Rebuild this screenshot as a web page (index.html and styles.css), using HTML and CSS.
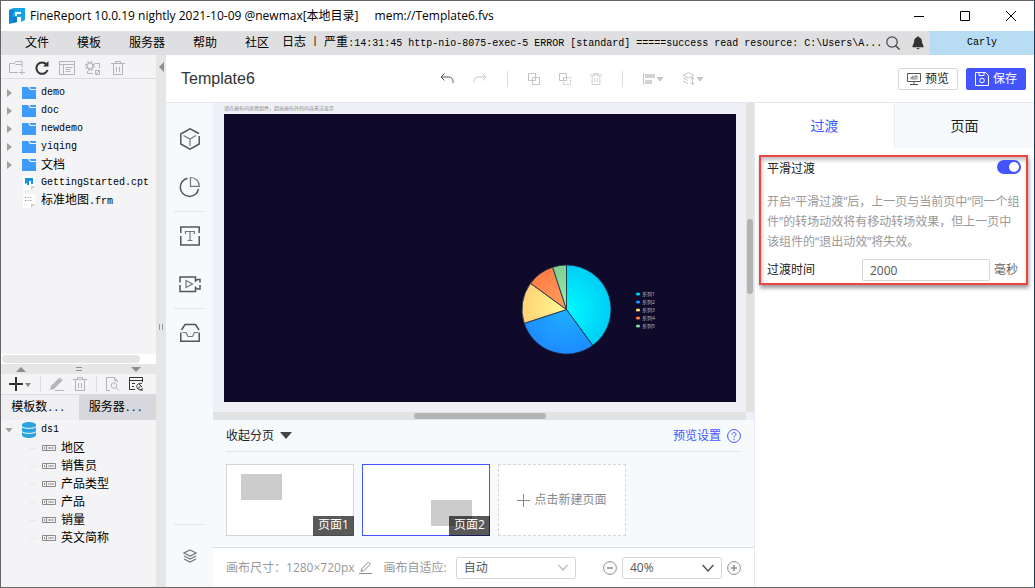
FILE: index.html
```html
<!DOCTYPE html>
<html lang="zh-CN">
<head>
  <meta charset="utf-8">
  <title>FineReport 10.0.19 nightly 2021-10-09</title>
  <link rel="stylesheet" href="styles.css">
</head>
<body>

<!-- shared icons -->
<svg class="sprite" aria-hidden="true">
  <symbol id="folder" viewBox="0 0 14 12"><path fill="#3d9bfb" d="M0 0h6l2 3h6v9H0z"/><path fill="#3d9bfb" d="M7.500 0H14v2H8.800z"/></symbol>
  <symbol id="field" viewBox="0 0 14 6"><path fill="none" stroke="#8a8a8a" d="M.5.500h13v5H.5zM4.500.500v5M6 3h6"/><path fill="#8a8a8a" d="M2 2h1v2H2z"/></symbol>
  <symbol id="trash" viewBox="0 0 14 14"><path fill="none" stroke="currentColor" d="M0 2.500h14M4.500 2.500v-2h5v2M2.500 3v10.500h9V3M5.500 6v5M8.500 6v5"/></symbol>
  <symbol id="down" viewBox="0 0 10 6"><path fill="none" stroke="currentColor" stroke-width="1.200" d="M.5.500 5 5.500 9.500.500"/></symbol>
  <symbol id="caret" viewBox="0 0 6 4"><path fill="currentColor" d="M0 0h6L3 4z"/></symbol>
</svg>

<div class="window">

  <!-- title bar -->
  <header class="titlebar">
    <svg class="logo" width="16" height="16" viewBox="0 0 16 16"><path fill="#0f86d9" d="M0 2 5 0v5l-1 1v9l-4 1z"/><path fill="#15a4e5" d="M5 0h11v12l-4 2V9H8v5l-4 1V6l1-1z"/><path fill="#fff" d="M6 4h6v2H8v2H6z"/><path fill="#0b78cc" d="M4 9h4v5l-4 1z"/></svg>
    <span>FineReport 10.0.19 nightly 2021-10-09 @newmax[本地目录]</span>
    <span class="file-path">mem://Template6.fvs</span>
    <div class="window-buttons">
      <button aria-label="最小化"><svg width="10" height="10"><path d="M0 5.500h10"/></svg></button>
      <button aria-label="最大化"><svg width="10" height="10"><path d="M.5.500h9v9h-9z"/></svg></button>
      <button aria-label="关闭"><svg width="10" height="10"><path d="M0 0l10 10M10 0L0 10"/></svg></button>
    </div>
  </header>

  <!-- menu bar -->
  <nav class="menubar">
    <button>文件</button>
    <button>模板</button>
    <button>服务器</button>
    <button>帮助</button>
    <button>社区</button>
    <div class="log"><span>日志</span><span class="mono">|</span><span>严重<span class="mono">:14:31:45 http-nio-8075-exec-5 ERROR [standard] =====success read resource: C:\Users\A...</span></span></div>
    <button class="menu-icon" aria-label="搜索"><svg width="14" height="14" viewBox="0 0 14 14"><circle cx="6" cy="6" r="5.200" fill="none" stroke="#444" stroke-width="1.200"/><path stroke="#444" stroke-width="1.400" d="M9.500 9.500 13.500 13.500"/></svg></button>
    <button class="menu-icon" aria-label="消息"><svg width="12" height="14" viewBox="0 0 12 14"><path fill="#333" d="M6 0l1 1.200c2.500.6 3 3 3 5.300L11.500 10v1.200H.5V10L2 6.500c0-2.300.5-4.700 3-5.300zM4.200 12h3.600L6 13.500z"/></svg></button>
    <button class="user mono">Carly</button>
  </nav>

  <div class="workspace">

    <!-- file tree + datasets -->
    <aside class="sidebar">
      <div class="tools file-tools">
        <button aria-label="新建文件夹"><svg width="16" height="14" viewBox="0 0 16 14"><path d="M9 11.500H.5v-9h5l1-2h6.500v6M6.500 3.500h6M13 8v6M10 11.500h6"/></svg></button>
        <button aria-label="刷新" class="dark"><svg width="14" height="14" viewBox="0 0 14 14"><path stroke-width="2" d="M11.500 3.500A5.700 5.700 0 1 0 12.500 9"/><path stroke="none" fill="currentColor" d="M13.500 0v5.500H8z"/></svg></button>
        <button aria-label="展开"><svg width="16" height="14" viewBox="0 0 16 14"><path d="M.5.500h15v13H.5zM.5 3.500h15M4.500 4v9M6.500 6.500h7M6.500 8.500h5M6.500 10.500h5"/></svg></button>
        <button aria-label="设置"><svg width="16" height="14" viewBox="0 0 16 14"><circle cx="5" cy="5" r="4" stroke-width="1.800" stroke-dasharray="1.800 1.340"/><circle cx="5" cy="5" r="2.800"/><path d="M10 2.500h4.500V7M2.500 10v2.500H8M10.500 9.500h4v4h-4zM11 13l3-3"/></svg></button>
        <button aria-label="删除"><svg width="14" height="14"><use href="#trash"/></svg></button>
      </div>
      <ul class="tree file-tree">
        <li><i class="twist"></i><svg width="14" height="12"><use href="#folder"/></svg><span class="mono">demo</span></li>
        <li><i class="twist"></i><svg width="14" height="12"><use href="#folder"/></svg><span class="mono">doc</span></li>
        <li><i class="twist"></i><svg width="14" height="12"><use href="#folder"/></svg><span class="mono">newdemo</span></li>
        <li><i class="twist"></i><svg width="14" height="12"><use href="#folder"/></svg><span class="mono">yiqing</span></li>
        <li><i class="twist"></i><svg width="14" height="12"><use href="#folder"/></svg><span>文档</span></li>
        <li><i class="twist leaf"></i><svg width="14" height="14" viewBox="0 0 14 14"><path fill="#fff" d="M1 0h12v10l-3 4H1z"/><path fill="#1793df" d="M3 2h8v6H9V5H7v4H5V7L3 8z"/><path fill="#ccc" d="M9 10h4l-4 4z"/></svg><span class="mono">GettingStarted.cpt</span></li>
        <li><i class="twist leaf"></i><svg width="14" height="14" viewBox="0 0 14 14"><path fill="#fff" d="M1 0h12v10l-3 4H1z"/><path fill="#1793df" d="M3 3h1v1H3zM3 6h1v1H3z"/><path stroke="#ccc" d="M5 3.500h5M5 6.500h5"/><path fill="#ccc" d="M9 10h4l-4 4z"/></svg><span>标准地图<span class="mono">.frm</span></span></li>
      </ul>
      <div class="tree-scroll"><div class="thumb"></div></div>
      <div class="splitter">
        <svg width="10" height="5"><path fill="#8e8e8e" d="M0 5 5 0l5 5z"/></svg>
        <svg width="6" height="4"><path stroke="#8e8e8e" d="M0 .5h6M0 3.500h6"/></svg>
        <svg width="10" height="5"><path fill="#8e8e8e" d="M0 0h10L5 5z"/></svg>
      </div>
      <div class="tools data-tools">
        <button aria-label="新增数据集" class="dark"><svg width="22" height="14" viewBox="0 0 22 14"><path stroke-width="2" d="M0 7h14M7 0v14"/><path fill="#888" stroke="none" d="M16 6h6l-3 4z"/></svg></button>
        <i class="sep"></i>
        <button aria-label="编辑"><svg width="14" height="14" viewBox="0 0 14 14"><path fill="currentColor" stroke="none" d="M0 13l1-4L9 1l3 3-8 8zM10 .5l3 2.500-.8.8-3-3z"/><path d="M5 13.500h9"/></svg></button>
        <button aria-label="删除"><svg width="14" height="14"><use href="#trash"/></svg></button>
        <i class="sep"></i>
        <button aria-label="预览数据"><svg width="14" height="14" viewBox="0 0 14 14"><path d="M4 13.500H.5V.5h8l3 3V5M8.500.5v3h3"/><circle cx="8" cy="8.500" r="2.800"/><path d="M10 10.500l3 3"/></svg></button>
        <button aria-label="连接设置" class="dark"><svg width="15" height="14" viewBox="0 0 15 14"><path d="M6 12.500H.5V.5h13V5M.5 3.500h13M3 6.500h3M3 9.500h2"/><path d="M13 6.500c-3-1-6 1-5 4 1 3 5 3 5.500.5M8.500 12l3-3M10 7l3 3M11 13l3 0"/></svg></button>
      </div>
      <div class="data-tabs">
        <button class="active">模板数<span class="mono">...</span></button>
        <button>服务器<span class="mono">...</span></button>
      </div>
      <div class="data-tree">
        <div class="tree-root"><i class="twist open"></i><svg width="14" height="16" viewBox="0 0 14 16"><path fill="#29a4e0" d="M0 3c0-4 14-4 14 0v10c0 4-14 4-14 0z"/><path fill="none" stroke="#fff" d="M0 4.500c1 2.500 13 2.500 14 0M0 9.500c1 2.500 13 2.500 14 0"/></svg><span class="mono">ds1</span></div>
        <ul class="tree fields">
          <li><svg width="14" height="6"><use href="#field"/></svg>地区</li>
          <li><svg width="14" height="6"><use href="#field"/></svg>销售员</li>
          <li><svg width="14" height="6"><use href="#field"/></svg>产品类型</li>
          <li><svg width="14" height="6"><use href="#field"/></svg>产品</li>
          <li><svg width="14" height="6"><use href="#field"/></svg>销量</li>
          <li><svg width="14" height="6"><use href="#field"/></svg>英文简称</li>
        </ul>
      </div>
    </aside>

    <div class="divider">
      <svg width="5" height="10"><path fill="#8e8e8e" d="M5 0v10L0 5z"/></svg>
      <svg class="grip" width="4" height="6"><path stroke="#999" d="M.5 0v6M3.500 0v6"/></svg>
    </div>

    <main class="designer">

      <div class="toolbar">
        <h1>Template6</h1>
        <div class="actions">
          <button aria-label="撤销" class="dark"><svg width="14" height="12" viewBox="0 0 14 12"><path d="M4.500.500 1 4l3.500 3.500M1 4h7.500c3 0 4.500 2 4.500 4.500V10"/></svg></button>
          <button aria-label="重做"><svg width="14" height="12" viewBox="0 0 14 12"><path d="M9.500.500 13 4 9.500 7.500M13 4H5.500C2.500 4 1 6 1 8.500V10"/></svg></button>
          <i class="sep"></i>
          <button aria-label="组合"><svg width="12" height="12" viewBox="0 0 12 12"><path d="M.5.500h7v7h-7zM4.500 4.500h7v7h-7z"/></svg></button>
          <button aria-label="取消组合"><svg width="12" height="12" viewBox="0 0 12 12"><path d="M.5.500h7v7h-7zM4.500 4.500v3h3v-3z"/><path stroke-dasharray="2 1" d="M8 4.500h3.500v7h-7V8"/></svg></button>
          <button aria-label="删除"><svg width="12" height="12" viewBox="0 0 14 14"><use href="#trash"/></svg></button>
          <i class="sep"></i>
          <button aria-label="对齐"><svg width="12" height="12" viewBox="0 0 12 12"><path d="M.5 0v12"/><path fill="currentColor" stroke="none" d="M2 1h10v4H2zM2 7h7v4H2z" opacity=".75"/></svg><svg width="6" height="4"><use href="#caret"/></svg></button>
          <button aria-label="层级"><svg width="13" height="13" viewBox="0 0 13 13"><path d="M6.500.500 12 3.500 6.500 6 1 3.500zM1 6l5 2.500M1 9l5 2.500M10.500 5.500v7M8.500 7.500l2-2 2 2M8.500 10.500l2 2 2-2"/></svg><svg width="6" height="4"><use href="#caret"/></svg></button>
        </div>
        <button class="btn"><svg width="14" height="12" viewBox="0 0 14 12"><path d="M.5.500h13v8H.5zM7 9v2M3 11.500h8"/><path stroke-width=".8" d="M4 6.500v-2h2v-2M6 4v3M8 7V3h2v3.500"/></svg>预览</button>
        <button class="btn primary"><svg width="14" height="14" viewBox="0 0 14 14"><path d="M.5.500h10l3 3v10H.5zM4 .5v3h5v-3"/><circle cx="7" cy="8.500" r="2.300"/></svg>保存</button>
      </div>

      <!-- component rail -->
      <nav class="rail">
        <button aria-label="模型"><svg width="22" height="22" viewBox="0 0 22 22"><path d="M20 5.500 11 .8 1.800 6v10l9.200 5.200 9.200-5.200V8"/><path class="thin" d="M4.500 7.500 11 11l6-3.500M11 11v7"/></svg></button>
        <button aria-label="图表"><svg width="22" height="22" viewBox="0 0 22 22"><path d="M8.500 2.200A9.200 9.200 0 1 0 19.500 13"/><path class="thin" d="M11.500 1.500v8.800h8.800c0-5-3.800-8.800-8.800-8.800z"/></svg></button>
        <hr>
        <button aria-label="文本"><svg width="22" height="22" viewBox="0 0 22 22"><path d="M1.800 8V2h18.400v6M1.800 11v9h18.400v-9"/><path class="thin" d="M6.500 9V6.500h9V9M11 6.500v9M8.500 15.500h5"/></svg></button>
        <button aria-label="媒体"><svg width="22" height="22" viewBox="0 0 22 22"><path d="M1 9.500V4h15.500v4l2-1.500h2.500v3M1 12v6.500h15.500v-4l2 1.500h2.500V12"/><path class="thin" d="M7 7.500v7l6.500-3.500z"/></svg></button>
        <hr>
        <button aria-label="素材"><svg width="22" height="22" viewBox="0 0 22 22"><path d="M2.500 8 6 2.500h10.500L20 8M1.800 10.500v8.700h18.400v-8.700"/><path class="thin" d="M3.500 10.500H7l2 4h4.500l2-4h3.500"/></svg></button>
        <hr class="push">
        <button aria-label="图层" class="layers"><svg width="14" height="14" viewBox="0 0 14 14"><path class="thin" d="M7 1l6 3-6 3-6-3zM1 7l6 3 6-3M1 10l6 3 6-3"/></svg></button>
      </nav>

      <!-- canvas -->
      <section class="stage">
        <div class="stage-view">
          <p class="hint">请在画布内放置组件，超出画布外的内容无法显示</p>
          <svg class="canvas" viewBox="0 0 512 288">
            <defs>
              <radialGradient id="c1" gradientUnits="userSpaceOnUse" cx="342.500" cy="195.500" r="45"><stop offset="0" stop-color="#00fbff"/><stop offset="1" stop-color="#00cdf5"/></radialGradient>
              <radialGradient id="c2" gradientUnits="userSpaceOnUse" cx="342.500" cy="195.500" r="45"><stop offset="0" stop-color="#20b0ff"/><stop offset="1" stop-color="#1c8cff"/></radialGradient>
              <radialGradient id="c3" gradientUnits="userSpaceOnUse" cx="342.500" cy="195.500" r="45"><stop offset="0" stop-color="#fffa94"/><stop offset="1" stop-color="#ffd274"/></radialGradient>
              <radialGradient id="c4" gradientUnits="userSpaceOnUse" cx="342.500" cy="195.500" r="45"><stop offset="0" stop-color="#ffa060"/><stop offset="1" stop-color="#ff7d45"/></radialGradient>
              <radialGradient id="c5" gradientUnits="userSpaceOnUse" cx="342.500" cy="195.500" r="45"><stop offset="0" stop-color="#9bf2ac"/><stop offset="1" stop-color="#7dcf92"/></radialGradient>
            </defs>
            <g stroke="#1b2b4a" stroke-width=".8">
              <path fill="url(#c1)" d="M342.500 195.500V151A44.500 44.500 0 0 1 368.700 231.500z"/>
              <path fill="url(#c2)" d="M342.500 195.500 368.700 231.500A44.500 44.500 0 0 1 300.200 209.300z"/>
              <path fill="url(#c3)" d="M342.500 195.500 300.200 209.300A44.500 44.500 0 0 1 306.500 169.300z"/>
              <path fill="url(#c4)" d="M342.500 195.500 306.500 169.300A44.500 44.500 0 0 1 328.700 153.200z"/>
              <path fill="url(#c5)" d="M342.500 195.500 328.700 153.200A44.500 44.500 0 0 1 342.500 151z"/>
            </g>
            <ellipse cx="414" cy="180" rx="2.200" ry="1.500" fill="#00d5f5"/>
            <ellipse cx="414" cy="188" rx="2.200" ry="1.500" fill="#1e90ff"/>
            <ellipse cx="414" cy="196" rx="2.200" ry="1.500" fill="#ffd97a"/>
            <ellipse cx="414" cy="204" rx="2.200" ry="1.500" fill="#ff8148"/>
            <ellipse cx="414" cy="212" rx="2.200" ry="1.500" fill="#84d899"/>
            <g class="legend">
              <text x="418" y="182">系列1</text>
              <text x="418" y="190">系列2</text>
              <text x="418" y="198">系列3</text>
              <text x="418" y="206">系列4</text>
              <text x="418" y="214">系列5</text>
            </g>
          </svg>
        </div>
        <div class="vscroll"><div class="thumb"></div></div>
        <div class="hscroll"><div class="thumb"></div></div>
      </section>

      <!-- pages -->
      <section class="pages">
        <div class="pages-head">
          <button class="fold">收起分页<svg width="12" height="7"><path fill="#444" d="M0 0h12L6 7z"/></svg></button>
          <a href="#">预览设置<svg width="14" height="14" viewBox="0 0 14 14"><circle cx="7" cy="7" r="6.400"/><path d="M5 5.500c0-2.600 4-2.600 4-.2C9 6.800 7 6.700 7 8.500M7 9.800v1.200"/></svg></a>
        </div>
        <div class="page-list">
          <button class="page"><i class="block"></i><span>页面1</span></button>
          <button class="page current"><i class="block low"></i><span>页面2</span></button>
          <button class="page add"><svg width="13" height="13"><path stroke="#888" d="M0 6.500h13M6.500 0v13"/></svg>点击新建页面</button>
        </div>
      </section>

      <footer class="statusbar">
        <span>画布尺寸：</span>
        <span class="size">1280×720px</span>
        <button aria-label="修改尺寸"><svg width="13" height="13" viewBox="0 0 13 13"><path d="M2 10.500l1-3L9.500 1l2 2L5 9.500zM0 12.500h13"/></svg></button>
        <label for="fit">画布自适应:</label>
        <div class="select fit"><select id="fit"><option>自动</option></select><svg width="10" height="7"><use href="#down"/></svg></div>
        <button class="zoom-out" aria-label="缩小"><svg width="14" height="14" viewBox="0 0 14 14"><circle cx="7" cy="7" r="6.400"/><path d="M4 7h6" stroke-width="1.500"/></svg></button>
        <div class="select zoom"><select aria-label="缩放"><option>40%</option></select><svg width="12" height="8"><use href="#down"/></svg></div>
        <button aria-label="放大"><svg width="14" height="14" viewBox="0 0 14 14"><circle cx="7" cy="7" r="6.400"/><path d="M4 7h6M7 4v6" stroke-width="1.500"/></svg></button>
      </footer>

      <!-- properties -->
      <aside class="props">
        <div class="prop-tabs">
          <button class="active">过渡</button>
          <button>页面</button>
        </div>
        <div class="transition">
          <div class="row head"><label for="smooth">平滑过渡</label><input type="checkbox" id="smooth" class="switch" checked></div>
          <p>开启“平滑过渡”后，上一页与当前页中“同一个组件”的转场动效将有移动转场效果，但上一页中该组件的“退出动效”将失效。</p>
          <div class="row time"><label for="duration">过渡时间</label><input type="text" id="duration" value="2000"><span>毫秒</span></div>
        </div>
      </aside>

    </main>
  </div>
</div>

</body>
</html>
```
FILE: styles.css
```css
* {
  box-sizing: border-box;
  margin: 0;
  padding: 0;
}

body {
  font-family: "Open Sans", "Noto Sans CJK SC", sans-serif;
  font-size: 12px;
  line-height: 18px;
  color: #222;
}

button, input, select {
  font: inherit;
  color: inherit;
  background: none;
  border: 0;
  border-radius: 0;
}

svg {
  display: block;
  flex: none;
  fill: none;
}

ul { list-style: none; }
a { text-decoration: none; }

.sprite {
  position: absolute;
  width: 0;
  height: 0;
}

.mono {
  font-family: "Liberation Mono", "Noto Sans CJK SC", monospace;
  font-size: 10px;
  color: #000;
}

.window {
  display: flex;
  flex-direction: column;
  height: 100vh;
  border: 1px solid #666;
  border-right-color: #1d3a57;
  background: #fff;
}

/* title bar */
.titlebar {
  display: flex;
  align-items: center;
  height: 30px;
  padding-left: 8px;
  color: #000;
  white-space: nowrap;
}
.logo { margin-right: 5px; }
.file-path { margin-left: 16px; }
.window-buttons {
  display: flex;
  margin-left: auto;
}
.window-buttons button {
  display: grid;
  place-items: center;
  width: 46px;
  height: 28px;
}
.window-buttons svg { stroke: #000; }

/* menu bar */
.menubar {
  display: flex;
  align-items: center;
  height: 24px;
  padding-left: 24px;
  gap: 28px;
  background: #dfdfe1;
  color: #000;
  white-space: nowrap;
}
.log {
  flex: 1;
  display: flex;
  gap: 6px;
  min-width: 0;
  margin: 0 -8px 0 -15px;
  overflow: hidden;
}
.menubar .menu-icon {
  margin-left: -16px;
}
.menubar .user {
  width: 104px;
  height: 24px;
  margin-left: -22px;
  background: #b8dcf2;
}

.workspace {
  flex: 1;
  display: flex;
  min-height: 0;
}

/* left sidebar */
.sidebar {
  display: flex;
  flex-direction: column;
  width: 155px;
  background: #f4f4f7;
  color: #000;
}
.tools {
  display: flex;
  align-items: center;
  padding: 0 8px;
  border-bottom: 1px solid #dcdce0;
  color: #b5b5b8;
}
.tools svg, .actions svg { stroke: currentColor; }
.tools .dark { color: #333; }
.file-tools {
  height: 24px;
  gap: 10px;
  padding-top: 2px;
}
.data-tools {
  height: 21px;
  gap: 9px;
}
.sep {
  width: 1px;
  height: 16px;
  background: #dcdce0;
}
.tree li, .tree-root {
  display: flex;
  align-items: center;
  height: 18px;
  white-space: nowrap;
}
.file-tree {
  flex: 1;
  padding: 5px 0 0 6px;
}
.file-tree svg, .tree-root svg { margin-right: 5px; }
.twist {
  width: 5px;
  height: 8px;
  margin-right: 10px;
  background: #a0a0a0;
  clip-path: polygon(0 0, 100% 50%, 0 100%);
}
.twist.leaf { background: none; }
.twist.open {
  width: 8px;
  height: 5px;
  margin-right: 9px;
  clip-path: polygon(0 0, 100% 0, 50% 100%);
}
.tree-scroll {
  height: 10px;
  padding: 1px;
  background: #fff;
}
.tree-scroll .thumb {
  width: 90%;
  height: 8px;
  border-radius: 4px;
  background: #e4e4e5;
}
.splitter {
  display: flex;
  align-items: center;
  justify-content: space-between;
  height: 10px;
  padding: 0 15px;
  background: #e6e6e6;
}
.data-tabs {
  display: flex;
  height: 25px;
}
.data-tabs button {
  flex: 1;
  padding-right: 3px;
  background: #d6d8dd;
}
.data-tabs .active {
  background: #efeff2;
}
.data-tree {
  height: 167px;
  padding-top: 1px;
}
.tree-root { padding-left: 4px; }
.fields {
  margin-left: 28px;
}
.fields li { gap: 5px; }
.fields li::before {
  content: "";
  width: 8px;
  height: 1px;
  background: #e9e9ed;
}

.divider {
  display: flex;
  flex-direction: column;
  align-items: center;
  width: 10px;
  padding: 7px 0 6px;
  background: #e6e6e6;
}
.grip { margin: auto 0; }

/* designer: toolbar on top, rail / stage / properties below */
.designer {
  flex: 1;
  min-width: 0;
  display: grid;
  grid-template-columns: 47px minmax(0, 1fr) 280px;
  grid-template-rows: 48px minmax(0, 1fr) 128px 39px;
}
.toolbar {
  grid-column: 1 / -1;
  display: flex;
  align-items: center;
  gap: 8px;
  padding: 0 8px 0 15px;
  border-bottom: 1px solid #e4e5ee;
}
h1 {
  width: 251px;
  font: 16px/24px "Liberation Sans", sans-serif;
  color: #333;
}
.actions {
  flex: 1;
  display: flex;
  align-items: center;
  gap: 19px;
  color: #c4c4c6;
}
.actions button {
  display: flex;
  align-items: center;
  gap: 2px;
}
.actions .sep { margin: 0 1px; }
.actions .dark { color: #555; }
.btn {
  display: flex;
  align-items: center;
  justify-content: center;
  gap: 4px;
  width: 60px;
  height: 22px;
  border: 1px solid #d5d6da;
  border-radius: 2px;
  white-space: nowrap;
}
.btn svg { stroke: #555; }
.btn.primary {
  border-color: #4455ff;
  background: #4455ff;
  color: #fff;
}
.btn.primary svg { stroke: #fff; }

.rail {
  grid-row: 2 / -1;
  display: flex;
  flex-direction: column;
  padding: 12px 8px 0;
  background: #f6fafd;
}
.rail button {
  display: grid;
  place-items: center;
  height: 48px;
}
.rail .layers { height: 62px; }
.rail hr {
  border: 0;
  border-top: 1px solid #e2e5e8;
}
.rail .push { margin-top: auto; }
.rail svg {
  stroke: #555;
  stroke-width: 1.5;
}
.rail .thin {
  stroke: #777;
  stroke-width: 1.2;
}

/* stage */
.stage {
  display: grid;
  grid-template-columns: minmax(0, 1fr) 8px;
  grid-template-rows: minmax(0, 1fr) 8px;
  background: #eff0f5;
}
.stage-view {
  padding: 0 10px 0 11px;
  overflow: hidden;
}
.hint {
  height: 11px;
  font-size: 5px;
  line-height: 10px;
  color: #888;
}
.canvas {
  width: 100%;
  background: #0f0a29;
}
.legend {
  fill: #b9bbc9;
  font-size: 5px;
}
.vscroll, .hscroll { background: #e2e2e2; }
.vscroll { padding: 116px 1px 0; }
.hscroll { padding: 1px 200px 0 201px; }
.thumb {
  border-radius: 4px;
  background: #b3b3b3;
}
.vscroll .thumb { height: 75px; }
.hscroll .thumb { height: 6px; }

/* pages */
.pages {
  padding: 0 13px;
  border-bottom: 1px solid #e0e3e6;
  background: #f6fafd;
}
.pages-head {
  display: flex;
  align-items: center;
  justify-content: space-between;
  height: 32px;
  border-bottom: 1px solid #e2e5e8;
}
.fold, .pages-head a {
  display: flex;
  align-items: center;
  gap: 6px;
}
.pages-head a { color: #4455ff; }
.pages-head a svg { stroke: #4455ff; }
.page-list {
  display: flex;
  gap: 8px;
  padding-top: 12px;
}
.page {
  position: relative;
  width: 128px;
  height: 72px;
  border: 1px solid #d6d6d8;
  background: #fff;
}
.page.current { border-color: #4455ff; }
.page span {
  position: absolute;
  right: -1px;
  bottom: -1px;
  width: 41px;
  height: 20px;
  background: rgba(0, 0, 0, .65);
  color: #fff;
}
.block {
  position: absolute;
  left: 14px;
  top: 9px;
  width: 41px;
  height: 26px;
  background: #ccc;
}
.block.low {
  left: 68px;
  top: 35px;
}
.page.add {
  display: flex;
  align-items: center;
  justify-content: center;
  gap: 4px;
  border-style: dashed;
  color: #888;
}

/* status bar */
.statusbar {
  display: flex;
  align-items: center;
  padding: 0 13px;
  color: #999;
  white-space: nowrap;
}
.statusbar button svg { stroke: #8c8c8c; }
.size { margin-right: 4px; }
.statusbar label { margin: 0 9px 0 12px; }
.select {
  display: grid;
  align-items: center;
}
.select select, .select svg { grid-area: 1 / 1; }
.select select {
  appearance: none;
  width: 100%;
  height: 22px;
  padding: 0 7px;
  border: 1px solid #d5d6da;
  border-radius: 2px;
  color: #555;
}
.select svg {
  justify-self: end;
  margin-right: 8px;
  pointer-events: none;
}
.fit { width: 120px; color: #bbb; }
.zoom {
  width: 100px;
  margin: 0 5px;
  color: #555;
}
.zoom-out { margin-left: auto; }

/* properties */
.props {
  grid-column: 3;
  grid-row: 2 / -1;
  border-left: 1px solid #e6e8f2;
}
.prop-tabs {
  display: flex;
  height: 45px;
}
.prop-tabs button {
  flex: 1;
  border-left: 1px solid #ebeef5;
  background: #f6fafd;
  font-size: 14px;
}
.prop-tabs .active {
  border: 0;
  background: #fff;
  color: #4455ff;
}
.transition {
  margin: 7px 6px 0 4px;
  padding: 3px 5px 2px 6px;
  border: 2px solid #ee4444;
  box-shadow: 1px 3px 4px rgba(0, 0, 0, .4), inset 1px 3px 4px rgba(0, 0, 0, .25);
}
.transition p {
  padding: 14px 0 7px;
  line-height: 20px;
  color: #999;
}
.row {
  display: flex;
  align-items: center;
  justify-content: space-between;
}
.row.head { align-items: flex-start; }
.switch {
  appearance: none;
  width: 24px;
  height: 14px;
  padding: 2px;
  border-radius: 7px;
  background: #4455ff;
}
.switch::before {
  content: "";
  display: block;
  width: 10px;
  height: 10px;
  margin-left: auto;
  border-radius: 50%;
  background: #fff;
}
.switch:not(:checked)::before { margin-left: 0; }
.time input {
  width: 128px;
  height: 22px;
  margin-left: auto;
  padding: 0 7px;
  border: 1px solid #d5d6da;
  border-radius: 2px;
  color: #555;
}
.time span {
  margin: 0 3px 0 4px;
  color: #666;
}
```
